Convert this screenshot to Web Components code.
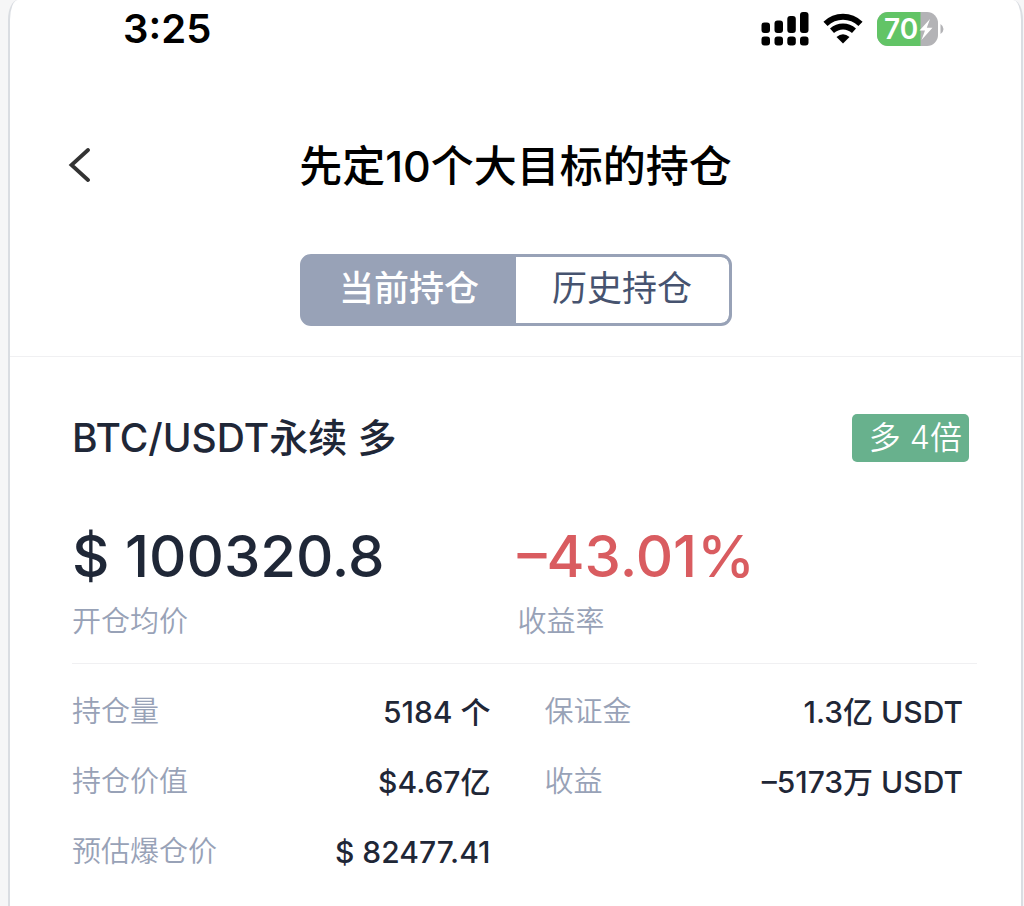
<!DOCTYPE html>
<html lang="zh-CN">
<head>
<meta charset="utf-8">
<meta name="viewport" content="width=device-width, initial-scale=1">
<title>持仓</title>
<style>
  body {
    margin: 0;
    background: #f6f6f7;
    color: #1f2737;
    font-family: Inter, "Noto Sans CJK SC", sans-serif;
  }
</style>
</head>
<body>
<position-page></position-page>

<script>
const define = (name, html) => {
  const template = document.createElement('template');
  template.innerHTML = html;
  customElements.define(name, class extends HTMLElement {
    constructor() {
      super();
      this.attachShadow({ mode: 'open' }).append(template.content.cloneNode(true));
    }
  });
};

define('status-bar', `
  <style>
    :host { display: flex; justify-content: space-between; align-items: center; height: 58px; padding: 0 76px 0 113px; color: #000; }
    time { font-size: 40px; line-height: 48px; font-weight: 600; }
    .icons { display: flex; align-items: center; gap: 14px; }
    svg { display: block; }
  </style>
  <time>3:25</time>
  <div class="icons">
    <svg width="48" height="34" viewBox="0 0 48 34" aria-label="信号">
      <rect x="0.500" y="10.500" width="8.500" height="10.500" rx="3"/><rect x="13.500" y="8.500" width="8.500" height="12.500" rx="3"/>
      <rect x="26.300" y="4" width="8.500" height="17" rx="3"/><rect x="39" y="0" width="8.500" height="21" rx="3"/>
      <rect x="0.500" y="24.500" width="8.500" height="9" rx="3"/><rect x="13.500" y="24.500" width="8.500" height="9" rx="3"/>
      <rect x="26.300" y="24.500" width="8.500" height="9" rx="3"/><rect x="39" y="24.500" width="8.500" height="9" rx="3"/>
    </svg>
    <svg width="40" height="34" viewBox="0 0 40 34" aria-label="无线网络">
      <path d="M2.500 11.800C12.500 2.300 27.500 2.300 37.500 11.800" fill="none" stroke="#000" stroke-width="6"/>
      <path d="M9 18.800C15.500 13 24.500 13 31 18.800" fill="none" stroke="#000" stroke-width="6"/>
      <path d="M13.500 25Q20 19.500 26.500 25L20 31.500Z"/>
    </svg>
    <svg width="68" height="34" viewBox="0 0 68 34" aria-label="电量">
      <defs><clipPath id="body"><rect width="61" height="34" rx="11"/></clipPath></defs>
      <g clip-path="url(#body)"><rect width="61" height="34" fill="#b3b3b6"/><rect width="43.500" height="34" fill="#62c466"/></g>
      <path d="M63.500 12Q66.500 14 66.500 17T63.500 22Z" fill="#b3b3b6"/>
      <text x="7" y="27" font-size="28" font-weight="600" font-family="Inter" fill="#fff">70</text>
      <path d="M53 7L42.500 18.500H48L44.500 28L55.500 15.800H49.800Z" fill="#fff"/>
    </svg>
  </div>`);

define('page-header', `
  <style>
    :host { display: grid; grid-template-columns: 1fr auto 1fr; align-items: center; margin-top: 78px; padding: 0 58px; color: #000; }
    button { all: unset; display: block; width: 24px; height: 36px; cursor: pointer; }
    svg { display: block; }
    h1 { margin: 0; font-size: 43px; line-height: 60px; font-weight: 500; white-space: nowrap; }
  </style>
  <button aria-label="返回"><svg width="24" height="36" viewBox="0 0 24 36"><path d="M20 2L3.500 17L20 32" fill="none" stroke="#333" stroke-width="3.800" stroke-linecap="round"/></svg></button>
  <h1><slot></slot></h1>`);

define('tab-switch', `
  <style>
    :host { display: grid; grid-template-columns: 1fr 1fr; box-sizing: border-box; width: 432px; margin: 58px auto 30px; border: 3px solid #98a2b7; border-radius: 11px; background: #98a2b7; overflow: hidden; }
  </style>
  <slot></slot>`);

define('tab-item', `
  <style>
    :host { display: block; }
    button { box-sizing: border-box; display: block; width: 100%; height: 66px; border: 0; padding: 0 0 4px; border-radius: 0 8px 8px 0; background: #fff; color: #46536f; font: inherit; font-size: 35px; line-height: 48px; cursor: pointer; }
    :host([selected]) button { background: #98a2b7; color: #fff; font-weight: 500; }
  </style>
  <button><slot></slot></button>`);

define('position-title', `
  <style>
    :host { display: flex; justify-content: space-between; align-items: center; padding: 57px 52px 0 62px; }
    h2 { margin: 0; font-size: 39px; line-height: 48px; font-weight: 500; }
    .badge { display: block; padding: 0 7px 0 17px; border-radius: 5px; background: #68b18d; color: #fff; font-size: 32px; line-height: 48px; font-weight: 350; }
  </style>
  <h2><slot></slot></h2>
  <span class="badge"><slot name="badge"></slot></span>`);

define('metric-item', `
  <style>
    :host { display: block; }
    .value { font-size: 58px; line-height: 72px; font-weight: 500; }
    :host([loss]) .value { color: #d95c60; }
    .label { margin-top: 10px; font-size: 29px; line-height: 40px; font-weight: 350; color: #98a2b7; }
  </style>
  <div class="value"><slot></slot></div>
  <div class="label"><slot name="label"></slot></div>`);

define('metric-row', `
  <style>
    :host { display: grid; grid-template-columns: 1fr 1fr; padding: 58px 58px 0 62px; }
  </style>
  <slot></slot>`);

define('line-rule', `
  <style>
    :host { display: block; border-top: 1px solid #f0f0f2; }
    :host([inset]) { margin: 21px 44px 13px 62px; }
  </style>`);

define('detail-grid', `
  <style>
    :host { display: grid; grid-template-columns: 1fr 1fr; column-gap: 54px; padding: 0 58px 20px 62px; }
  </style>
  <slot></slot>`);

define('detail-item', `
  <style>
    :host { display: block; }
    dl { display: flex; justify-content: space-between; margin: 0; font-size: 29px; line-height: 70px; white-space: nowrap; }
    dt { font-weight: 350; color: #98a2b7; }
    dd { margin: 0; font-size: 30px; font-weight: 500; }
  </style>
  <dl><dt><slot name="label"></slot></dt><dd><slot></slot></dd></dl>`);

define('position-page', `
  <style>
    :host { display: block; box-sizing: border-box; min-height: 100vh; margin: 0 1px 0 8px; border: solid #dadde2; border-width: 0 2px; border-radius: 10px 10px 0 0 / 20px 20px 0 0; background: #fff; }
  </style>
  <status-bar></status-bar>
  <page-header>先定10个大目标的持仓</page-header>
  <tab-switch>
    <tab-item selected>当前持仓</tab-item>
    <tab-item>历史持仓</tab-item>
  </tab-switch>
  <line-rule></line-rule>
  <position-title>BTC/USDT永续 多<span slot="badge">多 4倍</span></position-title>
  <metric-row>
    <metric-item>$ 100320.8<span slot="label">开仓均价</span></metric-item>
    <metric-item loss>–43.01%<span slot="label">收益率</span></metric-item>
  </metric-row>
  <line-rule inset></line-rule>
  <detail-grid>
    <detail-item><span slot="label">持仓量</span>5184 个</detail-item>
    <detail-item><span slot="label">保证金</span>1.3亿 USDT</detail-item>
    <detail-item><span slot="label">持仓价值</span>$4.67亿</detail-item>
    <detail-item><span slot="label">收益</span>–5173万 USDT</detail-item>
    <detail-item><span slot="label">预估爆仓价</span>$ 82477.41</detail-item>
  </detail-grid>`);
</script>
</body>
</html>
